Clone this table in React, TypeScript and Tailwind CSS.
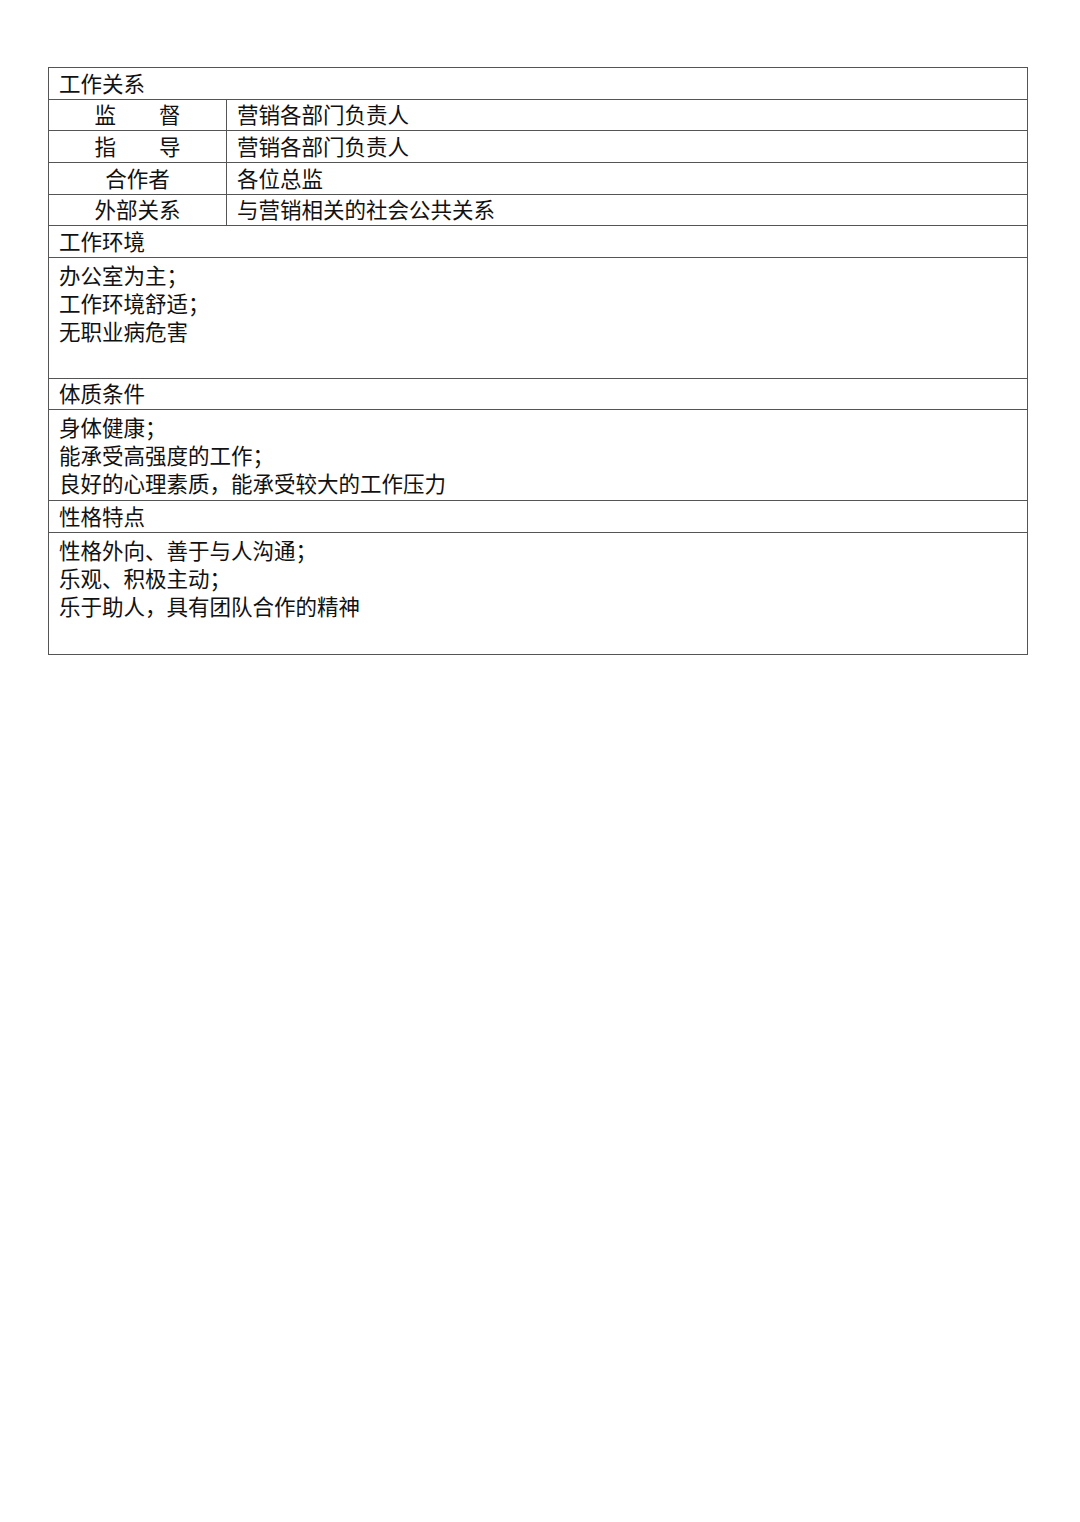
const relations = [
  { label: '监\u3000\u3000督', value: '营销各部门负责人', h: 'h-[31.5px]' },
  { label: '指\u3000\u3000导', value: '营销各部门负责人', h: 'h-[32px]' },
  { label: '合作者', value: '各位总监', h: 'h-[32px]' },
  { label: '外部关系', value: '与营销相关的社会公共关系', h: 'h-[31px]' },
];

const sections = [
  {
    title: '工作环境',
    titleH: 'h-[32px]',
    bodyH: 'h-[121px]',
    lines: ['办公室为主；', '工作环境舒适；', '无职业病危害'],
  },
  {
    title: '体质条件',
    titleH: 'h-[31px]',
    bodyH: 'h-[91px]',
    lines: ['身体健康；', '能承受高强度的工作；', '良好的心理素质，能承受较大的工作压力'],
  },
  {
    title: '性格特点',
    titleH: 'h-[32px]',
    bodyH: 'h-[122px]',
    lines: ['性格外向、善于与人沟通；', '乐观、积极主动；', '乐于助人，具有团队合作的精神'],
  },
];

export default function App() {
  return (
    <div
      className="w-[1080px] h-[1522px] bg-white pt-[67px] pl-[48px] text-[#111] text-[21.5px]"
      style={{ fontFamily: '"Noto Sans CJK SC", "Noto Sans", sans-serif' }}
    >
      <div className="w-[980px] border-t border-l border-r border-[#555]">
        <div className="h-[31.5px] border-b border-[#555] flex items-center px-[10px] pb-[2px] leading-none">
          工作关系
        </div>
        {relations.map((r) => (
          <div key={r.label + r.value} className={`${r.h} border-b border-[#555] flex`}>
            <div className="w-[178px] border-r border-[#555] flex items-center justify-center pb-[2px] leading-none">
              {r.label}
            </div>
            <div className="flex-1 flex items-center px-[10px] pb-[2px] leading-none">{r.value}</div>
          </div>
        ))}
        {sections.map((s) => (
          <div key={s.title}>
            <div className={`${s.titleH} border-b border-[#555] flex items-center px-[10px] pb-[2px] leading-none`}>
              {s.title}
            </div>
            <div className={`${s.bodyH} border-b border-[#555] px-[10px] pt-[3px] leading-[28px]`}>
              {s.lines.map((l) => (
                <div key={l}>{l}</div>
              ))}
            </div>
          </div>
        ))}
      </div>
    </div>
  );
}
